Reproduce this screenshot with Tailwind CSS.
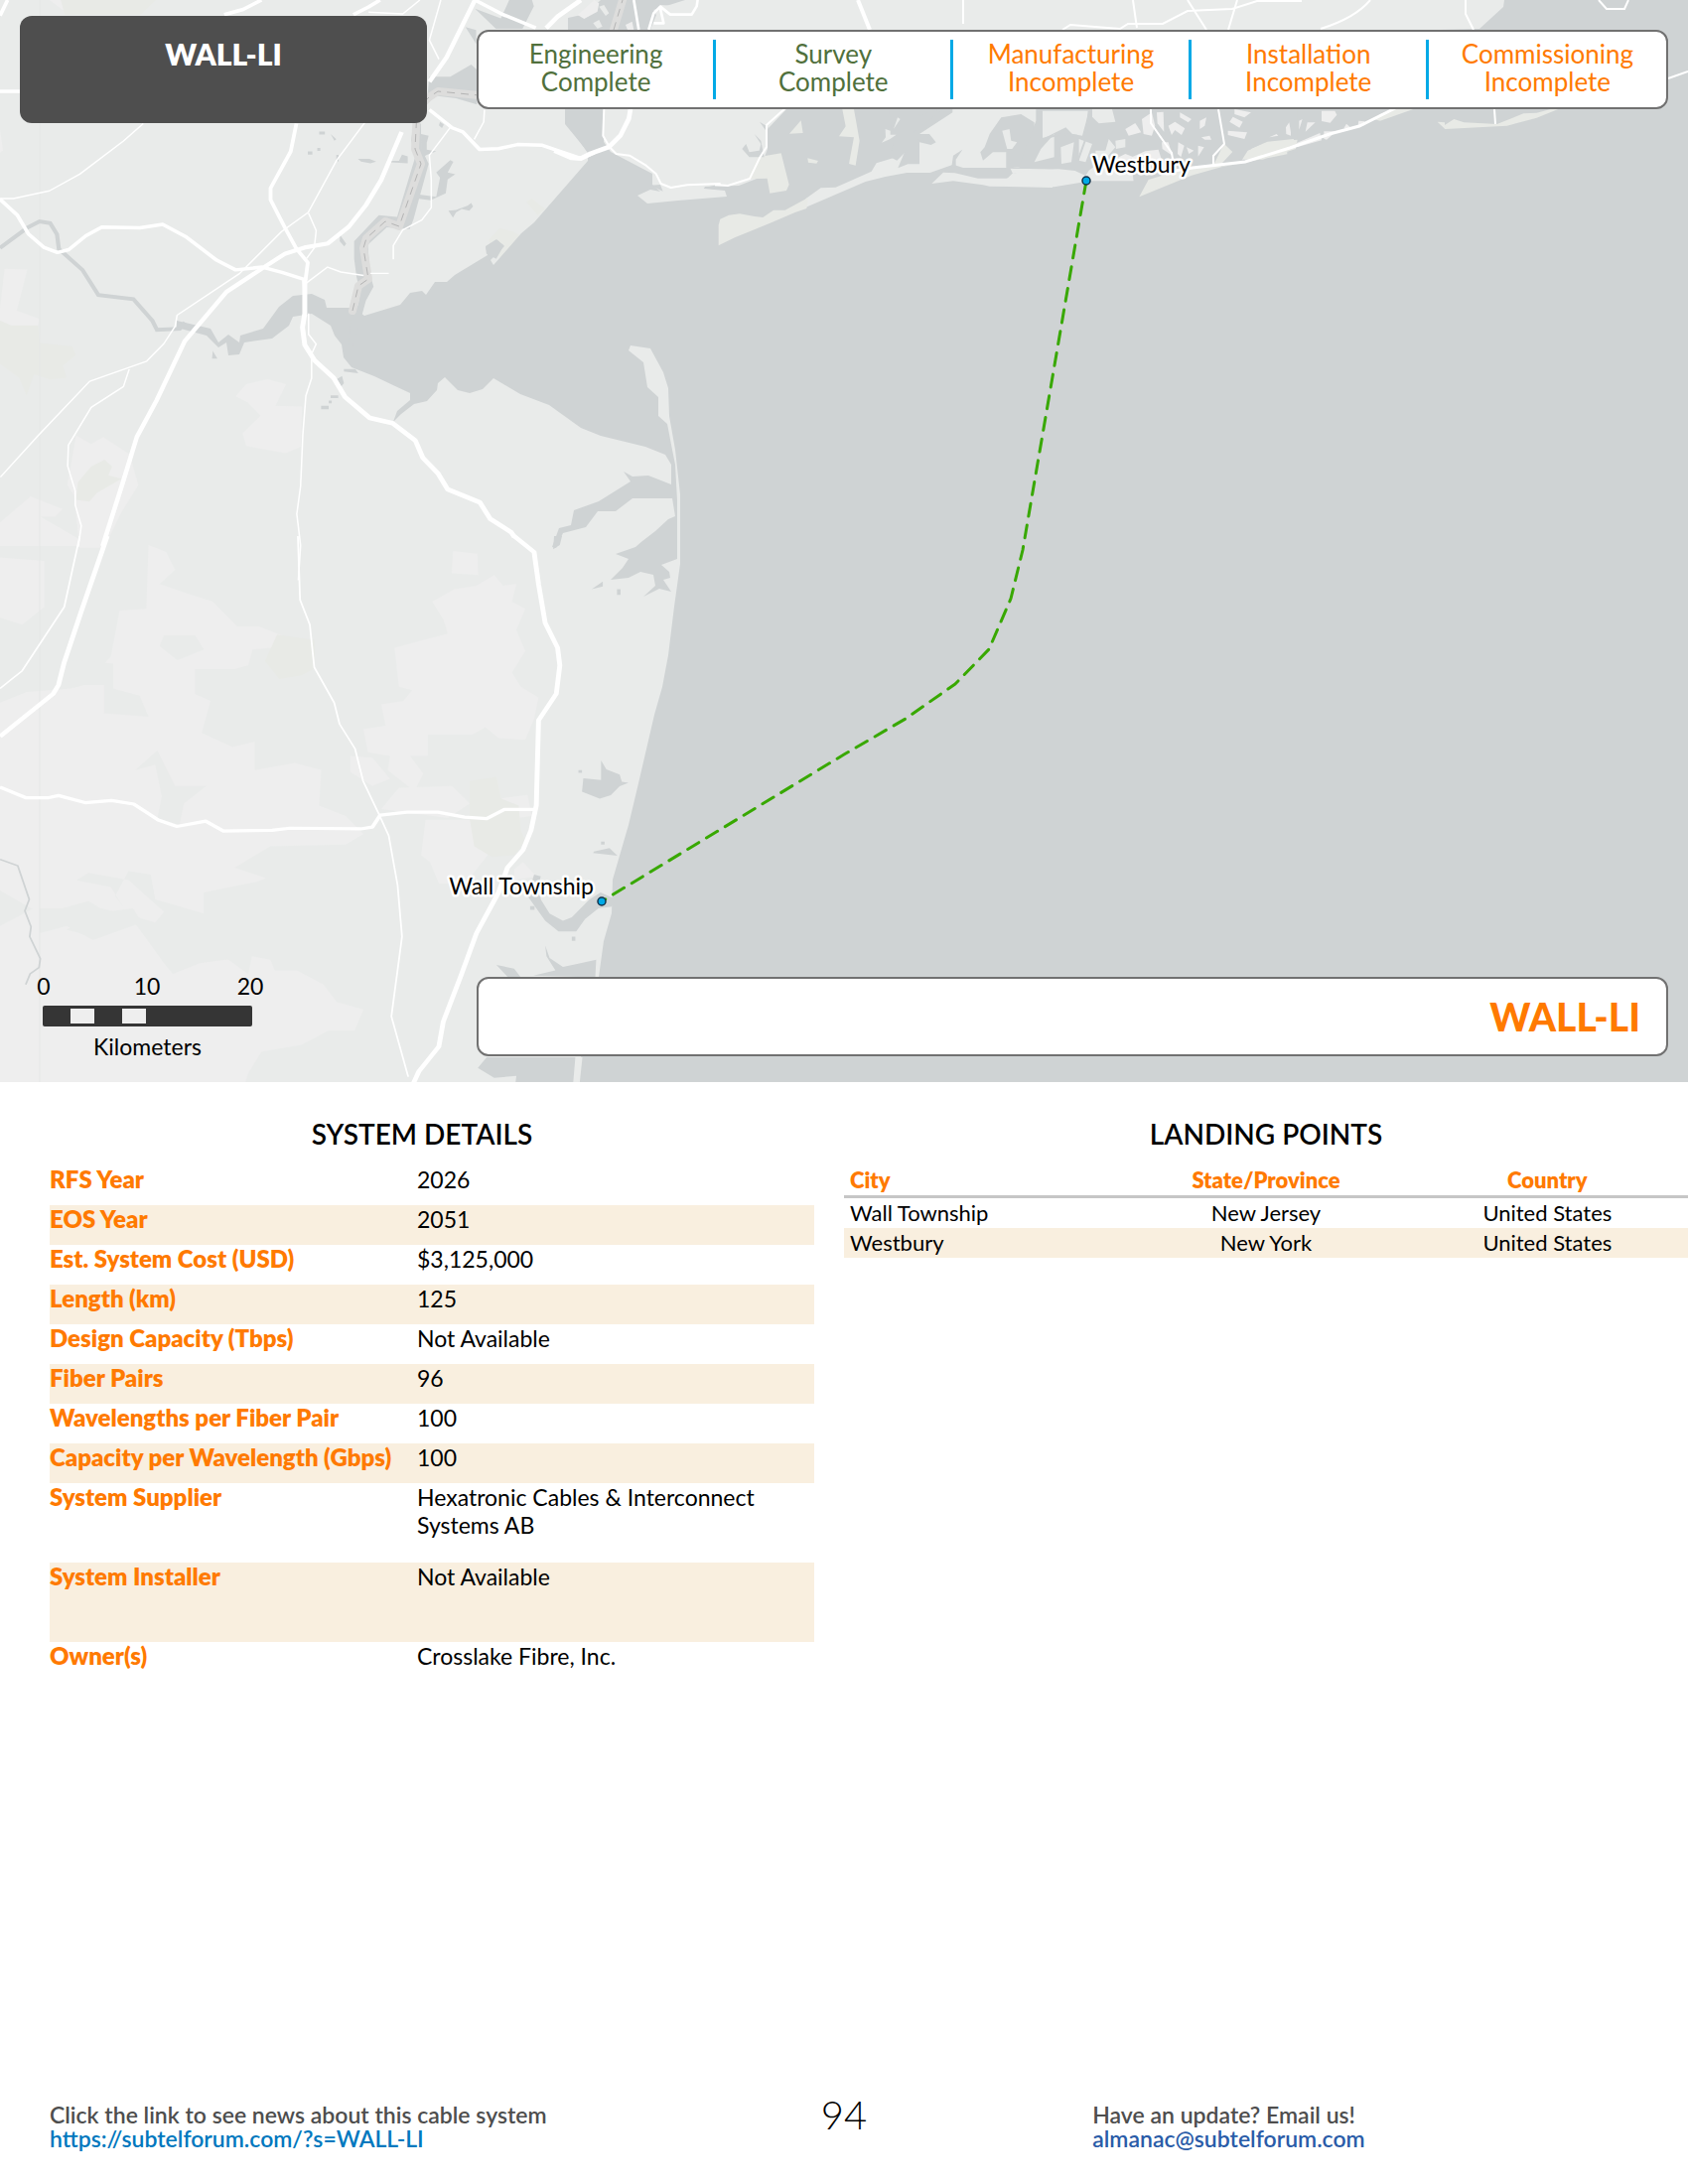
<!DOCTYPE html>
<html lang="en">
<head>
<meta charset="utf-8">
<meta name="viewport" content="width=device-width, initial-scale=1">
<title>WALL-LI</title>
<script src="https://cdn.jsdelivr.net/npm/@tailwindcss/browser@4"></script>
</head>
<body class="bg-white font-['Lato',sans-serif] text-black">
<div class="flex min-h-screen flex-col">

<section class="relative overflow-hidden">
<svg class="block h-auto w-full" viewBox="0 0 1700 1090" role="img" aria-label="Cable route map from Wall Township to Westbury">
  <rect width="1700" height="1090" fill="#e9ebea"/>

  <!-- Lighter built-up and rural patches -->
  <g transform="scale(.3827 .3508)" fill="#eeeeee">
    <path d="M12 772l60 2-28 118 60 24-4 18-100 0V885z"/>
    <path d="M648 1103l57-14 48 14-28 62 70 2-3 116-40 18-104-20-10-37 48-50-34-38-32-18z"/>
    <path d="M200 1250l40 25 32-20 70 50 22 88-45 80-45 100-65 0-14-150-18-30z"/>
    <path d="M0 1500l80-75 85 37-20 22-38 0 95 60 40 24H0z"/>
    <path d="M0 372l8 60-8 6zM130 0l66 0 12 44-44-16z"/>
  </g>
  <g transform="translate(0 540) scale(.4464 .3571)">
    <path fill="#eeeeee" d="M0 60l100 10 0 130-50 50-50-20zM335 25l40 20 20 50-35 40 70 30 50 20 55 70 50 0 60 30-30 30-45 5-10 45-30 10-90 0 0 70 35 20-20 90 70 40 50-15 0 80 90-20 60 20-5 100 60 30 40 50-40 30-170 5-80 60 70 30-20 10-120 30 0 60-110-40-10-70-50-10-30 70 110 190 20 30 60-30 120-20 40 10 10 30 50 0 60 40 30 50 60 20-20 60-60 0-60 40-90 20-30 60-20 80 70 60-10 80 90 60H0V1100l90-60 20-100 60 30 80 20 40 80-60-20-80 60 60 20 60-70 80 30 20-30-80-90-90-20-40 30-30 90-60-20L0 1000V470l60-30 100-10 30-10 60-80 20-130 60-5z"/>
    <path fill="#eeeeee" d="M1022 42l55 8 2 60-60-5zM975 185l50-35 50-10 40-30 20 30 30-5-10 50 30 20-20 60 20 60-30 60 20 40 40 30-10 60-20 60-60-5-30-30-30 20-100 0 0 60-40 0 30 50-20 50-60-60 5-40-50-10-10-65 50-10-10-60 50-10 20-30-30-10-10-110 60-20 60-20-10-40zM790 620l50 5 40 60-40 20-50-40zM860 770l40-60 120-5 40 50-50 40zM960 800l120 0 20 100-50 80-60 0-20-60-20-20zM1160 940l20-20 30 40-50 10zM1130 740l60-10 10 60-60 10z"/>
    <path fill="#e9ebea" d="M370 280l70 0 20 40-60 30-40-40zM165 350l90 10 0 70 60 20 20 60-100-10 0-80-80 0zM305 660l50-55 40 100 70 0-50 50-10 60-50-20 10-60-15-90zM90 1050l50 0 60-20 40 30 60-10 20 40-110 50-60-40-60 20zM510 1190l30-25 30 10-10 60z"/>
    <path fill="#e8eae6" d="M625 278l85 15 0 80-30 20-50 10-32-50zM1060 690l60-10 10 60 40 20 5 70 10 30-25 40-50 5-40-30-10-75z"/>
  </g>
  <g transform="scale(.3827 .3508)" fill="#e8eae6">
    <path d="M0 920l30 15 70 0 5 50 85 10 10 25-35 30 10 35-45 5-40-15-20 60-20-50-50-40zM205 1385l35-45 35-20 20 20-10 25 35 10-65 40-20 25-35-5zM160 0l250 0-40 42-200 0zM1385 580l15-10 35 30-20 18zM1285 690l30-35 35 10 25 15-60 60z"/>
  </g>
  <path d="M40 0V1090" stroke="#e5e7e6" fill="none"/>

  <!-- Bay and ocean -->
  <path fill="#cfd3d4" d="M569 30V125L592 153V162L565 193 538 224 525 235 497 267 494 262 508 248 500 241 489 248 491 257 458 277 450 284 438 284 429 297 425 293 413 295 403 307 367 318 356 310 329 310 327 302 314 296 295 298 281 309 265 331 242 338 241 345 230 337 220 345 212 331 178 323V330L208 338 220 350 228 345 230 358 241 357 246 345 274 341 291 328 295 319 314 316 333 328 337 338 344 347 346 360 354 370 377 379 398 389 413 396 413 403 400 414 396 425 404 417 417 407 430 404 440 393 441 386 448 380 461 393 473 396 486 392 497 381 524 397 553 408 585 431 605 439 650 450 670 458 676 468 676 488 653 479 637 480 628 475 635 485 603 505 578 514 575 529 563 532 556 551 560 552 567 537 590 531 602 515 620 515 637 502 677 502 680 520 673 523 660 535 647 545 640 551 620 558 633 563 627 572 615 584 633 582 645 576 658 579 660 590 648 601 664 593 676 596 668 584 675 582 674 576 666 569 682 563 682 504 680 468 677 453 672 427 663 419V400L652 390 648 365 633 353 635 348 655 351 668 375 673 391 674 419 680 453 685 498V568L679 611 673 660 667 692 659 720 643 789 633 831 617 886 616 920 608 948 603 984 585 1065 582 1090H1700V0H1515L1514 7 1490 29 1450 30 1395 60 1395 110H792L773 130V150L770 158 762 180 744 187 710 188 709 190 730 192 732 198 683 202 652 205 642 197 655 191 665 193 657 186V175L615 153 608 143V110L640 60 655 30 660 0H605L590 14 572 18V30Z"/>

  <!-- Inland water -->
  <g transform="scale(.3827 .3508)" fill="#cfd3d4">
    <path fill="none" stroke="#cfd3d4" stroke-width="11" d="M0 712l72-58 32-18 28 5 18 32 5 42 62 60 42 72 92 12 50 62 12 26 60-3 14-18"/>
    <path d="M1130 220l55 0 55-35 15 15v100l-55-18-75-10zM1490 315h65v125h-8l-55-85zM1340 0h60l5 18-30 65h-70l-55-58 68 28zM1225 78l28 8v40z"/>
    <path d="M1088 355l20 0 0 70 20 45-20 80-20 80-10 28-60-5-50 50 5 80 10 40-20 40-15 60-20 70h-10l5-70 20-50 5-30-10-50-6-50 0-50 65-75 48 5 25-90 22-80-10-50z"/>
    <path d="M1108 385l20 5-5 20 0 20 25 5-25 10-15 10zM1158 350l10 8-5 10-8-8zM1185 460l8 5-15 30 20 5-20 15-5 40-40 20-35-5-15 10-5-25 70 10 10-55-10-15zM1180 605l20-2 30-12 10-8 5 10-10 12-20-5-15 10-8 15zM942 456l30 0 18 8-15 5-25-5zM1020 462l30 0 8-18 15 5 0 20-45-3zM870 385l15 15-5 4zM840 378h15v8h-15zM810 435h12v9h-12zM835 425h8v8h-8zM885 445h6v20l-6-5zM895 675l16 25-5 8-12-15zM560 1008l12 22-14 0zM1278 710l30-20 18 15-20 38-26-15z"/>
    <path d="M845 1165h20v10h-20zM865 1150h8v8h-8zM870 1135h20v8h-20zM885 1090l15-10 5 20-15 20zM905 1060h30l8 12-38-5z"/>
  </g>
  <g transform="translate(0 540) scale(.4464 .3571)" fill="#cfd3d4">
    <path d="M1250 0h18l-5 25-15 12zM1335 150l25-22 0 14zM1392 150h8v16h-8zM1316 683l40 5 0-55 12 25 30 15 5 20 15 3-20 10-20 25-25 10-40-20zM1340 890l35-10 18 22-55-8zM1205 955l15 5-5 25 5 40 20 40 30 20 20-10 40-50 25-20 35 20-10 20-30 5-30 30-20 35-40 0-30-30-20-35-20-35zM1230 1155l10 35 30 25 40-10 35-10-2 50-140-5 50-15-20-40zM1120 1210l40 10 15 25-30-2zM1078 1500l20-30 200 0-5 75-130-2 2-20-50 5z"/>
    <path d="M1290 1130h8v12h-8zM1305 660h8v8h-8zM1356 862h8v8h-8zM1196 1044h10v10h-10z"/>
    <path fill="none" stroke="#cfd3d4" stroke-width="4" d="M0 912l40 18 26 95-10 32 14 45-3 28 24 62-3 25-20 18-10 30"/>
    <path fill="none" stroke="#e9ebea" stroke-width="8" d="M1350 985l30-22M1310 1470l-6 70"/>
  </g>

  <!-- Barrier beaches and marsh islands -->
  <g transform="translate(740 100) scale(.3333)">
    <path fill="#e9ebea" d="M215 300l45-32 45-2 108-48 15-25 50-15 40-30-25 60 30-12 35 0V130l35 8 15-8-20-25-30 0 100-65V30H960v180l-120 15-8-18-142 0-30-10-70 25-70 0-65 12-60 15-190 82z"/>
    <path fill="#e8eae6" d="M-49 380l5-18L-18 350 15 346 60 354 85 357l32-22 35 0 70-38-5 33-35 12L105 375 0 418l-49 24zM70 175l70-12 24 95-8 18-50 8-8-45-60 2zM165 104l35-40 6 38zM325 30h35l17 95-12 75-20-5 15-80-45-3 20-30zM220 178l32 8-5 8-25-3z"/>
    <path fill="#e9ebea" d="M595 255l35-34 35 2 70 16 100 0 10-14 60-10 55 0v52l-190-4-20-4-90-12z"/>
    <path fill="#cfd3d4" d="M465 30h75l20 20 50-20 20 0-90 70 40 10 10 25-45-15 0 75-40 0 20-45-35 35-20-10 10-50zM755 145l15-40 35-50 60-10 40 25 0 100-15 30-70 10 0-50-40 0-30 25-8-25zM655 205l5-35 28-18-20 30 0 25z"/>
    <path fill="#cfd3d4" d="M22 150l12-15 10 25 30-5 5-20-20-30 20 20 10 50-45 0zM75 68l25 15 0 20z"/>
    <path fill="#e9ebea" d="M808 95l22-5 5 35 18 5-15 20-15 0zM455 90l15 5 0 12 18 0-20 14-24 10 12-16zM492 55l8 5-20 30z"/>
  </g>
  <g transform="translate(980 100) scale(.3333)">
    <path fill="#cfd3d4" d="M190 30h790v130l-500 80-110-10-30-15-170-5-60 0-70 5 100-10 20-60 30-80z"/>
    <path fill="#e9ebea" d="M210 35l140 0-20 75-30-5-20-20-70 35zM360 30h60l10 38-50 5-20-20zM205 150l40-45 0 70-60 15zM265 145l40-15-8 60-30 5zM320 120l40 15-20 55-20-5zM370 155l30 0 10-35 20 25-30 35-30 0zM430 125l30-5 0 25-28 5zM118 225l60-12 80-2 50 5 32 15 10-16 20-15 110 10 5 37-130 0-110 18-80-2-100-5 40-20z"/>
    <path fill="#eeeeee" d="M460 90l30-18 18 28-38 10zM510 60l30-20 10 40-10 30-25-5zM555 40l20-2 2 60-20-25zM590 80l20-12 30 20-10 20-20-15-10 15zM625 40l35 20-10 10-25-15zM770 95l58 5-8 20-50-12zM775 68l10-15 30 15-10 18zM790 30l50 10-20 15-30-10zM570 130l20 0 12 40-30-20zM480 175l40-18 40-5 12 38-90 0zM620 130l18 10-10 35-10-10zM645 145l22 10-15 10zM680 140l18 5-18 28zM430 180l30-15 25 10-30 15zM685 65l20-10-5 25-15 10zM690 115l25-5 5 12-20 0z"/>
    <path fill="#e8eae6" d="M502 295l28-52 110-33 88-14 30-62 26 25-30 32-5 12 70-12 130-35v10L750 205 660 230zM830 155l60-25 90-8-5 28-100 32-62 0z"/>
    <path fill="none" stroke="#cfd3d4" stroke-width="6" d="M350 35l-10 85-25 70M210 120l55-15 50 5"/>
  </g>
  <g transform="translate(1260 100) scale(.3333)">
    <path fill="#e8eae6" d="M0 150l50-22 78-8 10 20-138 44zM370 60l20-15 40-15 60 0-100 35zM563 68l22 2 0 8 28-18 30 10 100 5 80-32 40-2 50-13 20 0-70 28-90 24-187 10z"/>
    <path fill="#eeeeee" d="M213 35l40 0 6 12-20 24-26-5zM138 132l70-30 5 22-72 20zM220 97l38 0-30 25-8-3zM280 88l8-14 15 14zM325 65l18 2 0 12-20 0zM105 85l10-15 5 30 0 10-14-5zM145 65l10-5-10 32zM170 70l24 0-30 28zM55 115l22-10 5 5z"/>
  </g>
  <g transform="translate(400 0) scale(.3333)">
    <path fill="#eeeeee" d="M545 45l50-45 15 10-5 25-40 22zM690 75l20-10 5 25-15 10z"/>
    <path fill="#e9ebea" d="M610 20l15-5 15 25-10 8zM592 70l18-10 10 20-15 6z"/>
    <path fill="#cfd3d4" d="M700 0h190l-5 20-90-5-30 75-35-10z"/>
    <path fill="#cfd3d4" d="M925 568l35-8v12zM765 560l30-2 8 20z"/>
    <path fill="#e9ebea" d="M870 0h90v90h-155l-30-60z"/>
  </g>

  <!-- State boundary band -->
  <g fill="none" stroke-linejoin="round">
    <path stroke="#dddddc" stroke-width="8" stroke-linecap="round" d="M355 313L361 288 371 281 366 250 369 240 388 223 402 228 424 165 418 150 420 110 432 98 441 92 482 96M618 30L627 0"/>
    <path stroke="#b4b4b4" stroke-width="1" stroke-dasharray="8 6" d="M355 313L361 288 371 281 366 250 369 240 388 223 402 228 424 165 418 150 420 110 432 98 441 92 482 96M618 30L627 0"/>
  </g>

  <!-- Roads -->
  <g fill="none" stroke="#fff" stroke-linejoin="round" transform="scale(.3827 .3508)">
    <g stroke-width="10">
      <path stroke-width="12" d="M270 1568l52-178 38-135 52-105 74-170 110-142 95-68 60-42 50-17 62-12 55-48 45-62 40-72 54-138M1130 235l45-70 75-165"/>
      <path stroke-width="13" d="M802 800l0 100-6 40 6 50 26 45 50 50 30 55 65 60 60 15 60 50 20 50 40 45 25 45 85 38L1290 1490 1345 1528 1354 1542"/>
      <path d="M0 572l45 45 30 55 40 38 36 15 30-8 45-40 42-25 100 2 60-10 60 35 82 68 50 28 70-8 52 15 58 20 2 30M780 355l-15 80-53 105 0 34 38 80 30 60 30 40 -6 50M1130 315l60 52 28 12 44 50 50-2 50-12 65 2 102 38 35-16M0 262h55M0 45L20 0M590 42l50-15 48-27M930 42l40-22 30-20M1250 0l70 40 90 40"/>
    </g>
    <g stroke-width="4">
      <path d="M0 570l35 0 95-22 80-48 115-95 52-50M1 1370l100-120 135-155 150-58 45-50 30-50 5-32 165-120 110-120 70-55 75-150 82-120"/>
      <path d="M340 1060l-15 50-85 60-60 108-2 60 20 72 0 40 16 60-8 60M812 612l20 50-5 50-20 30M807 812l55-45 35 14 60 10M975 785h48M1035 745l0-40 25-45 50-28 25-36 0-80-5-70 55-80M1248 400l25-50 2-35M812 900l0 60 20 28-12 28 0 70-15 50-8 110-6 150-10 80 10 90-6 100M970 35l90 5 45-40M1160 0l-30 115 25 55"/>
    </g>
  </g>
  <g fill="none" stroke="#fff" stroke-linejoin="round" transform="translate(400 0) scale(.3333)">
    <path stroke-width="14" d="M475 455l50 22 30 2 30-15 55-20 35-35 25-50 5-30M450 85l35-35 70-50"/>
    <path stroke-width="8" d="M760 90l15-50 20-20 30 24 65 0 15-25 3-20M795 25l10 45-30 0M715 0l15 90"/>
    <path stroke-width="6" d="M625 330l-3 80 20 35 20 20 40 5 50 30 30 25 15 30 30 12 50-8 100-4"/>
  </g>
  <g fill="none" stroke="#fff" stroke-width="2">
    <path d="M720 186l13 1 22-7 10-21 7-11V126l20-18"/>
    <path stroke-width="4" d="M864 0l12 30"/>
    <path d="M970 0v24M1141 0l4 28M1070 30l8-5 50 4 8-5h35l25-13 45-2 25-8h45M1196 0l19 30M1246 0l-9 30M1380 0q-15 18-50 29M1476 0v14l8 16M1610 0l8 9h18l4-9M1680 79l20-7"/>
    <path d="M1159 110v14l21 30 2 12M1227 110l6 35-11 12v10M1505 110l1 15"/>
    <path stroke-width="3" d="M1183 172l18-3 53-6 45-14 40-14 30-8 42-21"/>
  </g>
  <g fill="none" stroke="#fff" stroke-linejoin="round" transform="translate(0 540) scale(.4464 .3571)">
    <path stroke-width="11" d="M242 0l-58 210-40 150-12 60-12 25-120 120M1160 0l45 45 10 90 15 110 28 70 5 50-8 80-40 75-5 240-12 70-18 55-35 50-20 70-50 115-35 120-40 130-10 70-45 70-22 60"/>
    <path stroke-width="9" d="M0 708l58 30h52l22-6 60 20 60-6 50 10 55 45 42 18 65-15 40 28 110-2 40-6 160 2 26-5 18-34 60-8h70l60 14 50 4 40-26h65"/>
    <path stroke-width="4" d="M672 0l5 180 22 70 10 120 45 100 12 60 35 70 18 90 36 95 22 60 20 140 10 145-24 225 38 170M180 0l-35 200-95 180-50 50"/>
  </g>

  <!-- Cable route -->
  <path fill="none" stroke="#38a800" stroke-width="3" stroke-linecap="round" stroke-linejoin="round" stroke-dasharray="13 9" d="M1094 182L1036 519 1030 554 1018 603 996 654 962 689 912 724 850 760 606 908"/>
  <g fill="#00a9e6" stroke="#12324a" stroke-width="1.5">
    <circle cx="1094" cy="182" r="4"/>
    <circle cx="606" cy="908" r="4"/>
  </g>
  <g class="text-[23px]" fill="#000" stroke="#fff" stroke-width="5" stroke-linejoin="round" paint-order="stroke">
    <text x="1100" y="174">Westbury</text>
    <text x="598" y="901" text-anchor="end">Wall Township</text>
  </g>
</svg>

<header class="absolute inset-x-0 top-0 flex items-start gap-[50px] px-5 pt-4">
  <h1 class="h-[108px] w-[410px] shrink-0 rounded-xl bg-[#4e4e4e] pt-5 text-center text-[30px] leading-9 font-extrabold text-white">WALL-LI</h1>
  <ol class="mt-3.5 grid h-20 flex-1 grid-cols-5 rounded-xl border-2 border-[#717171] bg-white py-2 text-center text-[26px] leading-7 text-[#ff7a00]">
    <li class="border-r-3 border-[#00a9e6] text-[#50703c]">Engineering<br>Complete</li>
    <li class="border-r-3 border-[#00a9e6] text-[#50703c]">Survey<br>Complete</li>
    <li class="border-r-3 border-[#00a9e6]">Manufacturing<br>Incomplete</li>
    <li class="border-r-3 border-[#00a9e6]">Installation<br>Incomplete</li>
    <li>Commissioning<br>Incomplete</li>
  </ol>
</header>

<div class="absolute inset-x-0 bottom-0 flex items-end px-5 pb-[26px]">
  <div class="-mb-1 w-[460px] shrink-0 text-[23px] leading-7">
    <div class="-ml-7 grid w-[312px] grid-cols-3 text-center"><span>0</span><span>10</span><span>20</span></div>
    <div class="mt-1.5 ml-[23px] flex h-[21px] w-[211px] rounded-xs bg-[#353535] py-[3px] pl-7">
      <span class="w-6 bg-[#eeeeee]"></span><span class="ml-7 w-6 bg-[#eeeeee]"></span>
    </div>
    <div class="mt-1.5 ml-[23px] w-[211px] text-center">Kilometers</div>
  </div>
  <div class="flex h-20 flex-1 items-center justify-end rounded-xl border-2 border-[#717171] bg-white pr-[26px] text-[39px] font-black text-[#ff7a00]">WALL-LI</div>
</div>
</section>

<main class="grid grid-cols-2 pt-9">
  <section>
    <h2 class="text-center text-[28px] leading-8 font-semibold">SYSTEM DETAILS</h2>
    <table class="mt-4 ml-[50px] w-[calc(100%-80px)] border-collapse text-left text-[23px] leading-7">
      <tbody class="[&_td]:p-0 [&_td]:align-top [&_th]:w-[370px] [&_th]:p-0 [&_th]:align-top [&_th]:text-[24px] [&_th]:font-extrabold [&_th]:text-[#ff7a00] [&_tr:nth-child(even)]:bg-[#f9efdf]">
        <tr class="h-10"><th scope="row">RFS Year</th><td>2026</td></tr>
        <tr class="h-10"><th scope="row">EOS Year</th><td>2051</td></tr>
        <tr class="h-10"><th scope="row">Est. System Cost (USD)</th><td>$3,125,000</td></tr>
        <tr class="h-10"><th scope="row">Length (km)</th><td>125</td></tr>
        <tr class="h-10"><th scope="row">Design Capacity (Tbps)</th><td>Not Available</td></tr>
        <tr class="h-10"><th scope="row">Fiber Pairs</th><td>96</td></tr>
        <tr class="h-10"><th scope="row">Wavelengths per Fiber Pair</th><td>100</td></tr>
        <tr class="h-10"><th scope="row">Capacity per Wavelength (Gbps)</th><td>100</td></tr>
        <tr class="h-20"><th scope="row">System Supplier</th><td>Hexatronic Cables &amp; Interconnect<br>Systems AB</td></tr>
        <tr class="h-20"><th scope="row">System Installer</th><td>Not Available</td></tr>
        <tr class="h-10"><th scope="row">Owner(s)</th><td>Crosslake Fibre, Inc.</td></tr>
      </tbody>
    </table>
  </section>
  <section>
    <h2 class="text-center text-[28px] leading-8 font-semibold">LANDING POINTS</h2>
    <table class="mt-4 w-full table-fixed border-collapse text-center text-[22px] leading-[30px]">
      <thead class="border-b-3 border-[#c6c6c6] text-[#ff7a00]">
        <tr class="[&_th]:p-0 [&_th]:font-extrabold"><th scope="col" class="text-left"><span class="ml-1.5">City</span></th><th scope="col">State/Province</th><th scope="col">Country</th></tr>
      </thead>
      <tbody class="[&_td]:p-0 [&_tr:nth-child(even)]:bg-[#f9efdf]">
        <tr><td class="text-left"><span class="ml-1.5">Wall Township</span></td><td>New Jersey</td><td>United States</td></tr>
        <tr><td class="text-left"><span class="ml-1.5">Westbury</span></td><td>New York</td><td>United States</td></tr>
      </tbody>
    </table>
  </section>
</main>

<footer class="mt-auto grid grid-cols-[1fr_auto_1fr] items-start pb-[34px] text-[23px] leading-6 font-semibold text-[#4e4e4e]">
  <p class="pl-[50px]">Click the link to see news about this cable system<br><a class="text-[#0078be]" href="https://subtelforum.com/?s=WALL-LI">https://subtelforum.com/?s=WALL-LI</a></p>
  <p class="text-[40px] leading-6 font-light text-black">94</p>
  <p class="pl-[227px]">Have an update? Email us!<br><a class="text-[#2a5ca8]" href="mailto:almanac@subtelforum.com">almanac@subtelforum.com</a></p>
</footer>
</div>
</body>
</html>
